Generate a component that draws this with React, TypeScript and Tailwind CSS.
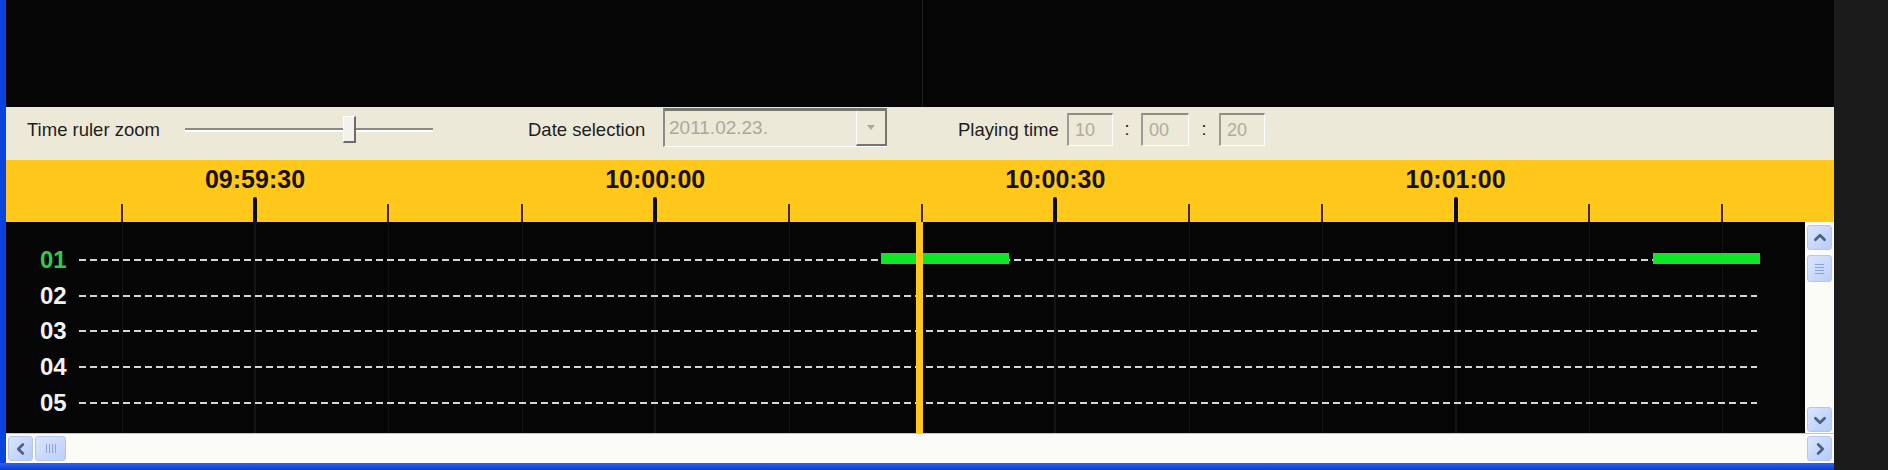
import React from "react";

const TICK0 = 255; // x of 09:59:30 (page coords)
const STEP = 133.4; // 10 seconds
const FRAME = 6; // width of blue frame on the left

const ticks = Array.from({ length: 13 }, (_, i) => {
  const k = i - 1;
  const labels: Record<number, string> = { 0: "09:59:30", 3: "10:00:00", 6: "10:00:30", 9: "10:01:00" };
  return { x: TICK0 + k * STEP - FRAME, major: k % 3 === 0, label: labels[k] };
});

const channels = [
  { id: "01", active: true, bars: [{ from: 881, to: 1009 }, { from: 1653, to: 1760 }] },
  { id: "02", active: false, bars: [] },
  { id: "03", active: false, bars: [] },
  { id: "04", active: false, bars: [] },
  { id: "05", active: false, bars: [] },
];

const narrow = { fontFamily: "'Liberation Sans', Arial, sans-serif" };
const ui = { fontFamily: "'Liberation Sans', Arial, sans-serif" };

function Chevron({ dir }: { dir: "up" | "down" | "left" | "right" }) {
  const pts = {
    up: "7,14 12,9 17,14",
    down: "7,10 12,15 17,10",
    left: "14,7 9,12 14,17",
    right: "10,7 15,12 10,17",
  }[dir];
  return (
    <svg width="22" height="22" viewBox="0 0 24 24">
      <polyline points={pts} fill="none" stroke="#4d6185" strokeWidth="3" strokeLinecap="round" strokeLinejoin="round" />
    </svg>
  );
}

function ScrollButton({ dir }: { dir: "up" | "down" | "left" | "right" }) {
  return (
    <div className="w-[25px] h-[25px] rounded-[3px] border border-[#b4c6f2] bg-gradient-to-br from-[#dbe5fd] to-[#b7cbf7] flex items-center justify-center">
      <Chevron dir={dir} />
    </div>
  );
}

function Grip({ vertical }: { vertical: boolean }) {
  return (
    <div className={vertical ? "flex flex-col gap-[2px] items-center" : "flex gap-[2px] items-center"}>
      {[0, 1, 2, 3].map((i) => (
        <div key={i} className={vertical ? "w-[9px] h-[1px] bg-[#8da3d6]" : "w-[1px] h-[9px] bg-[#8da3d6]"} />
      ))}
    </div>
  );
}

function SunkenBox({ value, width }: { value: string; width: string }) {
  return (
    <div
      className={`${width} h-[33px] border-t-2 border-l-2 border-t-[#8e8d85] border-l-[#9d9c94] border-b border-r border-b-white border-r-white bg-[#ece9d8] flex items-center pl-[6px] text-[18px] text-[#aeac9f]`}
    >
      {value}
    </div>
  );
}

export default function App() {
  return (
    <div className="w-[1888px] h-[470px] flex bg-[#1b1b1b] overflow-hidden">
      <div className="w-[1834px] flex flex-col">
        <div className="flex flex-1">
          <div className="w-[6px] bg-[#0a44dc]" />
          <div className="w-[1828px] flex flex-col">
            {/* video area */}
            <div className="h-[107px] bg-[#050505] flex">
              <div className="w-[916px]" />
              <div className="w-[1px] bg-[#1f1f1f]" />
            </div>

            {/* toolbar */}
            <div className="h-[53px] bg-[#ece9d8] flex items-center pb-[8px] text-[#1e1e1e]" style={ui}>
              <div className="w-[179px] pl-[21px] text-[18.5px] whitespace-nowrap">Time ruler zoom</div>
              <div className="relative w-[248px] h-[27px] flex items-center">
                <div className="w-full h-[4px] border-t-2 border-[#8a8985] bg-white" />
                <div className="absolute left-[158px] top-0 w-[13px] h-[27px] bg-[#f3f2ec] border-l border-t border-white border-r-2 border-b-2 border-r-[#6d6c68] border-b-[#6d6c68]" />
              </div>
              <div className="ml-[95px] w-[135px] text-[18.5px] whitespace-nowrap">Date selection</div>
              <div className="w-[224px] h-[39px] -mt-[4px] flex border-t-[3px] border-l-2 border-t-[#77766f] border-l-[#8d8c85] border-b border-b-white">
                <div className="flex-1 flex items-center pl-[4px] text-[19px] text-[#aaa89c]">2011.02.23.</div>
                <div className="w-[31px] h-full border-l border-l-white border-r-2 border-b-2 border-r-[#76756e] border-b-[#76756e] flex items-center justify-center">
                  <svg width="10" height="6" viewBox="0 0 10 6">
                    <polygon points="1,0 9,0 5,5" fill="#a9a89f" />
                  </svg>
                </div>
              </div>
              <div className="ml-[71px] w-[109px] text-[18.5px] whitespace-nowrap">Playing time</div>
              <SunkenBox value="10" width="w-[46px]" />
              <div className="w-[28px] text-center text-[18px]">:</div>
              <SunkenBox value="00" width="w-[48px]" />
              <div className="w-[30px] text-center text-[18px]">:</div>
              <SunkenBox value="20" width="w-[46px]" />
            </div>

            {/* time ruler */}
            <div className="relative h-[62px] bg-[#ffc81a]" style={narrow}>
              {ticks.map((t, i) => (
                <React.Fragment key={i}>
                  {t.label && (
                    <div
                      className="absolute top-[7px] -translate-x-1/2 text-[25px] leading-[25px] font-bold text-[#161208] whitespace-nowrap"
                      style={{ left: t.x }}
                    >
                      {t.label}
                    </div>
                  )}
                  <div
                    className={
                      t.major
                        ? "absolute bottom-0 w-[4px] h-[25px] rounded-t-[2px] bg-[#0c0a05]"
                        : "absolute bottom-0 w-[2px] h-[18px] bg-[#3b2c05]"
                    }
                    style={{ left: t.x - (t.major ? 2 : 1) }}
                  />
                </React.Fragment>
              ))}
            </div>

            {/* tracks */}
            <div className="h-[211px] flex">
              <div className="relative w-[1799px] bg-[#050505] overflow-hidden">
                {ticks.map((t, i) => (
                  <div
                    key={i}
                    className={t.major ? "absolute top-0 bottom-0 w-[2px] bg-[#141414]" : "absolute top-0 bottom-0 w-[1px] bg-[#121212]"}
                    style={{ left: t.x - (t.major ? 1 : 0) }}
                  />
                ))}
                <div className="relative flex flex-col pt-[20px]">
                  {channels.map((c) => (
                    <div key={c.id} className="h-[35.75px] flex items-center">
                      <div
                        className={`w-[73px] pl-[34px] text-[24px] leading-[24px] font-bold ${c.active ? "text-[#28cf4c]" : "text-[#f2f2f2]"}`}
                        style={narrow}
                      >
                        {c.id}
                      </div>
                      <div className="relative w-[1678px] h-[2px] bg-[repeating-linear-gradient(90deg,#d6d6d6_0px,#d6d6d6_7px,transparent_7px,transparent_11px)]">
                        {c.bars.map((b, j) => (
                          <div
                            key={j}
                            className="absolute top-[-6px] h-[11px] bg-[#0fe628]"
                            style={{ left: b.from - 79, width: b.to - b.from }}
                          />
                        ))}
                      </div>
                    </div>
                  ))}
                </div>
                {/* playhead */}
                <div className="absolute top-0 bottom-0 left-[910px] w-[7px] bg-[#ffc61c]" />
              </div>
              <div className="w-[29px] bg-[#fbfbf8] flex flex-col items-center pt-[3px] pb-[1px]">
                <ScrollButton dir="up" />
                <div className="mt-[5px] w-[25px] h-[27px] rounded-[3px] border border-[#b4c6f2] bg-gradient-to-br from-[#dbe5fd] to-[#bccef8] flex items-center justify-center">
                  <Grip vertical />
                </div>
                <div className="flex-1" />
                <ScrollButton dir="down" />
              </div>
            </div>

            {/* horizontal scrollbar */}
            <div className="h-[30px] bg-[#fbfbf8] border-t border-[#c9c7bd] flex items-center pl-[2px] pr-[2px]">
              <ScrollButton dir="left" />
              <div className="ml-[2px] w-[31px] h-[25px] rounded-[3px] border border-[#b4c6f2] bg-gradient-to-br from-[#dbe5fd] to-[#bccef8] flex items-center justify-center">
                <Grip vertical={false} />
              </div>
              <div className="flex-1" />
              <ScrollButton dir="right" />
            </div>
          </div>
        </div>
        <div className="h-[7px] bg-gradient-to-b from-[#2a62f0] to-[#0a3bd0]" />
      </div>
      <div className="flex-1 bg-[#1b1b1b]" />
    </div>
  );
}
